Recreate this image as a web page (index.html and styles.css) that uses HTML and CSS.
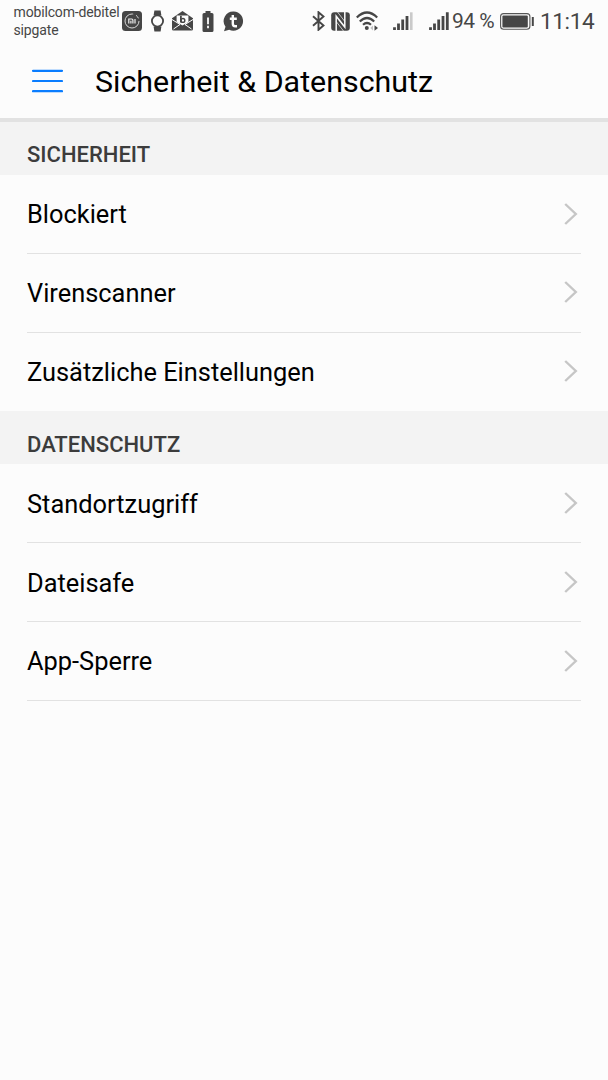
FILE: index.html
```html
<!DOCTYPE html>
<html lang="de">
<head>
    <meta charset="UTF-8">
    <meta name="viewport" content="width=device-width, initial-scale=1.0">
    <title>Sicherheit &amp; Datenschutz</title>
    <link rel="stylesheet" href="styles.css">
</head>
<body>
    <div class="status-bar">
        <div class="carriers">
            <div>mobilcom-debitel</div>
            <div>sipgate</div>
        </div>
        <div class="notifications">
            <svg class="icon-mi" width="20" height="20" viewBox="0 0 20 20">
                <rect width="20" height="20" rx="3.5" fill="#464646"/>
                <circle cx="10" cy="10" r="7" fill="none" stroke="#d8d8d8" stroke-width="1" stroke-dasharray="34 3 4 3"/>
                <path d="M6.8 12.4V8h2.9q1.2 0 1.2 1.2v3.2M8.9 9.800v2.600M13 8v4.400" fill="none" stroke="#eee" stroke-width="1.2"/>
            </svg>
            <svg class="icon-watch" width="13" height="22" viewBox="0 0 13 22">
                <path d="M3.4 0.500h6.200l.8 5H2.600zM3.400 21.500h6.200l.8-5H2.600z" fill="#464646"/>
                <circle cx="6.5" cy="11" r="5.6" fill="#fcfcfc" stroke="#464646" stroke-width="1.8"/>
            </svg>
            <svg class="icon-mail" width="21" height="20" viewBox="0 0 21 20">
                <path d="M0 7.2L10.5 0 21 7.2V18q0 1.5-1.5 1.5h-18Q0 19.500 0 18z" fill="#464646"/>
                <path d="M4.600 4.500h11.800v6.500l-5.900 3.500-5.900-3.500z" fill="#fcfcfc"/>
                <path d="M0 8.500l8 5L1.500 18M21 8.500l-8 5 6.500 4.500" fill="none" stroke="#fcfcfc" stroke-width="1"/>
                <path d="M8.900 4.800v6.700" stroke="#464646" stroke-width="1.800"/>
                <circle cx="10.900" cy="9.400" r="1.900" fill="none" stroke="#464646" stroke-width="1.400"/>
            </svg>
            <svg class="icon-alert" width="12" height="21" viewBox="0 0 12 21">
                <path d="M3.500 0h5v2H10q1.500 0 1.500 1.500v16q0 1.500-1.500 1.500H2Q.5 21 .5 19.500v-16Q.5 2 2 2h1.500z" fill="#464646"/>
                <path d="M6 6.500v6.800M6 14.800v2.400" stroke="#fcfcfc" stroke-width="1.800"/>
            </svg>
            <svg class="icon-chat" width="21" height="21" viewBox="0 0 21 21">
                <path d="M10.800 0.500a9.600 9.600 0 1 1-4.600 18.200L1 20.300l1.500-4.600A9.600 9.600 0 0 1 10.800.5z" fill="#464646"/>
                <path d="M9.800 4v8.800q0 2.500 2.400 2.500h1.800M6.800 7.800h7" fill="none" stroke="#fcfcfc" stroke-width="2.400"/>
            </svg>
        </div>
        <div class="system">
            <svg class="icon-bluetooth" width="13" height="20" viewBox="0 0 13 20">
                <path d="M1 5.200L11.500 14.500 6.500 18.800V1.200l5 4.300L1 14.800" fill="none" stroke="#464646" stroke-width="1.900"/>
            </svg>
            <svg class="icon-nfc" width="19" height="19" viewBox="0 0 19 19">
                <rect x=".2" y=".2" width="18.600" height="18.600" rx="3" fill="#464646"/>
                <path d="M5.200 19V4.200L13.800 15V0" fill="none" stroke="#fcfcfc" stroke-width="1.500"/>
                <path d="M6.500 0L13.800 9.500M5.200 9.500L12.500 19" stroke="#fcfcfc" stroke-width=".7"/>
            </svg>
            <svg class="icon-wifi" width="23" height="20" viewBox="0 0 23 20">
                <path d="M.8 6.500Q11 -3.500 21.200 6.500M3.800 10.500Q11 3.500 18.200 10.500M7 13.800Q11 10.200 15 13.800" fill="none" stroke="#464646" stroke-width="2.200"/>
                <circle cx="10.800" cy="17" r="2" fill="#464646"/>
                <path d="M17 14.500v5L14.200 17z" fill="#c4c4c4"/>
                <path d="M18.500 14.300v5.400L22 17z" fill="#464646"/>
            </svg>
            <svg class="icon-signal-one" width="20" height="19" viewBox="0 0 20 19">
                <path d="M1.500 15.300V18M5.500 11.500V18M9.700 7.500V18M14 4V18" stroke="#464646" stroke-width="2.800"/>
                <path d="M18.300.3V18" stroke="#cacaca" stroke-width="2.600"/>
            </svg>
            <svg class="icon-signal-two" width="20" height="19" viewBox="0 0 20 19">
                <path d="M1.500 15.300V18M5.500 11.500V18M9.700 7.500V18M14 4V18M18.300.3V18" stroke="#464646" stroke-width="2.800"/>
            </svg>
            <span class="percent">94 %</span>
            <svg class="icon-battery" width="35" height="17" viewBox="0 0 35 17">
                <rect x=".6" y=".6" width="29.300" height="15.600" rx="3" fill="none" stroke="#565656" stroke-width="1.100"/>
                <rect x="2.400" y="2.400" width="25.400" height="12" rx="1" fill="#464646"/>
                <path d="M32.800 4v9" stroke="#464646" stroke-width="2"/>
            </svg>
            <span class="time">11:14</span>
        </div>
    </div>

    <header>
        <svg class="menu" width="31" height="24" viewBox="0 0 31 24">
            <path d="M1 1.800h29M1 12h29M1 22.200h29" stroke="#0a7dff" stroke-width="2.200" stroke-linecap="round"/>
        </svg>
        <h1>Sicherheit &amp; Datenschutz</h1>
    </header>

    <main>
        <h2>SICHERHEIT</h2>
        <ul class="settings">
            <li><span>Blockiert</span><svg class="chevron" width="14" height="22" viewBox="0 0 14 22"><path d="M1.200 1l10.600 10L1.200 21"/></svg></li>
            <li><span>Virenscanner</span><svg class="chevron" width="14" height="22" viewBox="0 0 14 22"><path d="M1.200 1l10.600 10L1.200 21"/></svg></li>
            <li class="no-line"><span>Zusätzliche Einstellungen</span><svg class="chevron" width="14" height="22" viewBox="0 0 14 22"><path d="M1.200 1l10.600 10L1.200 21"/></svg></li>
        </ul>
        <h2>DATENSCHUTZ</h2>
        <ul class="settings">
            <li><span>Standortzugriff</span><svg class="chevron" width="14" height="22" viewBox="0 0 14 22"><path d="M1.200 1l10.600 10L1.200 21"/></svg></li>
            <li><span>Dateisafe</span><svg class="chevron" width="14" height="22" viewBox="0 0 14 22"><path d="M1.200 1l10.600 10L1.200 21"/></svg></li>
            <li><span>App-Sperre</span><svg class="chevron" width="14" height="22" viewBox="0 0 14 22"><path d="M1.200 1l10.600 10L1.200 21"/></svg></li>
        </ul>
    </main>
</body>
</html>
```
FILE: styles.css
```css
* {
    box-sizing: border-box;
}

body {
    font-family: Roboto, sans-serif;
    margin: 0;
    min-height: 1080px;
    background-color: #fcfcfc;
    color: #000;
}

svg {
    display: block;
    flex: none;
}

.status-bar {
    display: flex;
    height: 44px;
    padding-left: 13.5px;
    color: #464646;
    white-space: nowrap;
}

.carriers {
    width: 108.5px;
    padding-top: 3px;
    font-size: 14px;
    letter-spacing: -0.15px;
    line-height: 18px;
}

.notifications {
    display: flex;
    align-items: center;
    height: 42px;
    width: 190px;
}

.icon-watch {
    margin-left: 9px;
}

.icon-mail {
    margin-left: 8px;
}

.icon-alert {
    margin-left: 9px;
}

.icon-chat {
    margin-left: 9px;
}

.system {
    display: flex;
    align-items: center;
    height: 42px;
}

.icon-nfc {
    margin-left: 6px;
}

.icon-wifi {
    margin-left: 6px;
}

.icon-signal-one {
    margin-left: 14px;
}

.icon-signal-two {
    margin-left: 16px;
}

.percent {
    width: 48px;
    padding-left: 3px;
    font-size: 21px;
    letter-spacing: -0.5px;
}

.icon-battery {
    margin-left: 3px;
}

.time {
    margin-left: 5px;
    font-size: 22.6px;
    letter-spacing: -0.4px;
}

header {
    display: flex;
    align-items: center;
    height: 78px;
    padding-left: 32px;
    border-bottom: 4px solid #e2e2e2;
}

h1 {
    margin: 0 0 0 32px;
    padding-top: 2px;
    font-size: 30.4px;
    font-weight: 400;
    line-height: 36px;
}

h2 {
    margin: 0;
    height: 53px;
    padding: 11.3px 27px 0;
    background-color: #f3f3f3;
    color: #3c3c3c;
    font-size: 22px;
    font-weight: 500;
    line-height: 44px;
}

.settings {
    list-style: none;
    margin: 0;
    padding: 0 27px;
}

.settings li {
    display: flex;
    align-items: center;
    justify-content: space-between;
    height: 78.8px;
    padding-right: 3px;
    border-bottom: 1px solid #e2e2e2;
    font-size: 25.4px;
}

.settings span {
    padding-top: 1px;
}

.settings .no-line {
    border-bottom-color: transparent;
}

.chevron {
    margin-bottom: 0.6px;
}

.chevron path {
    fill: none;
    stroke: #c6c6c6;
    stroke-width: 2.4;
}
```
